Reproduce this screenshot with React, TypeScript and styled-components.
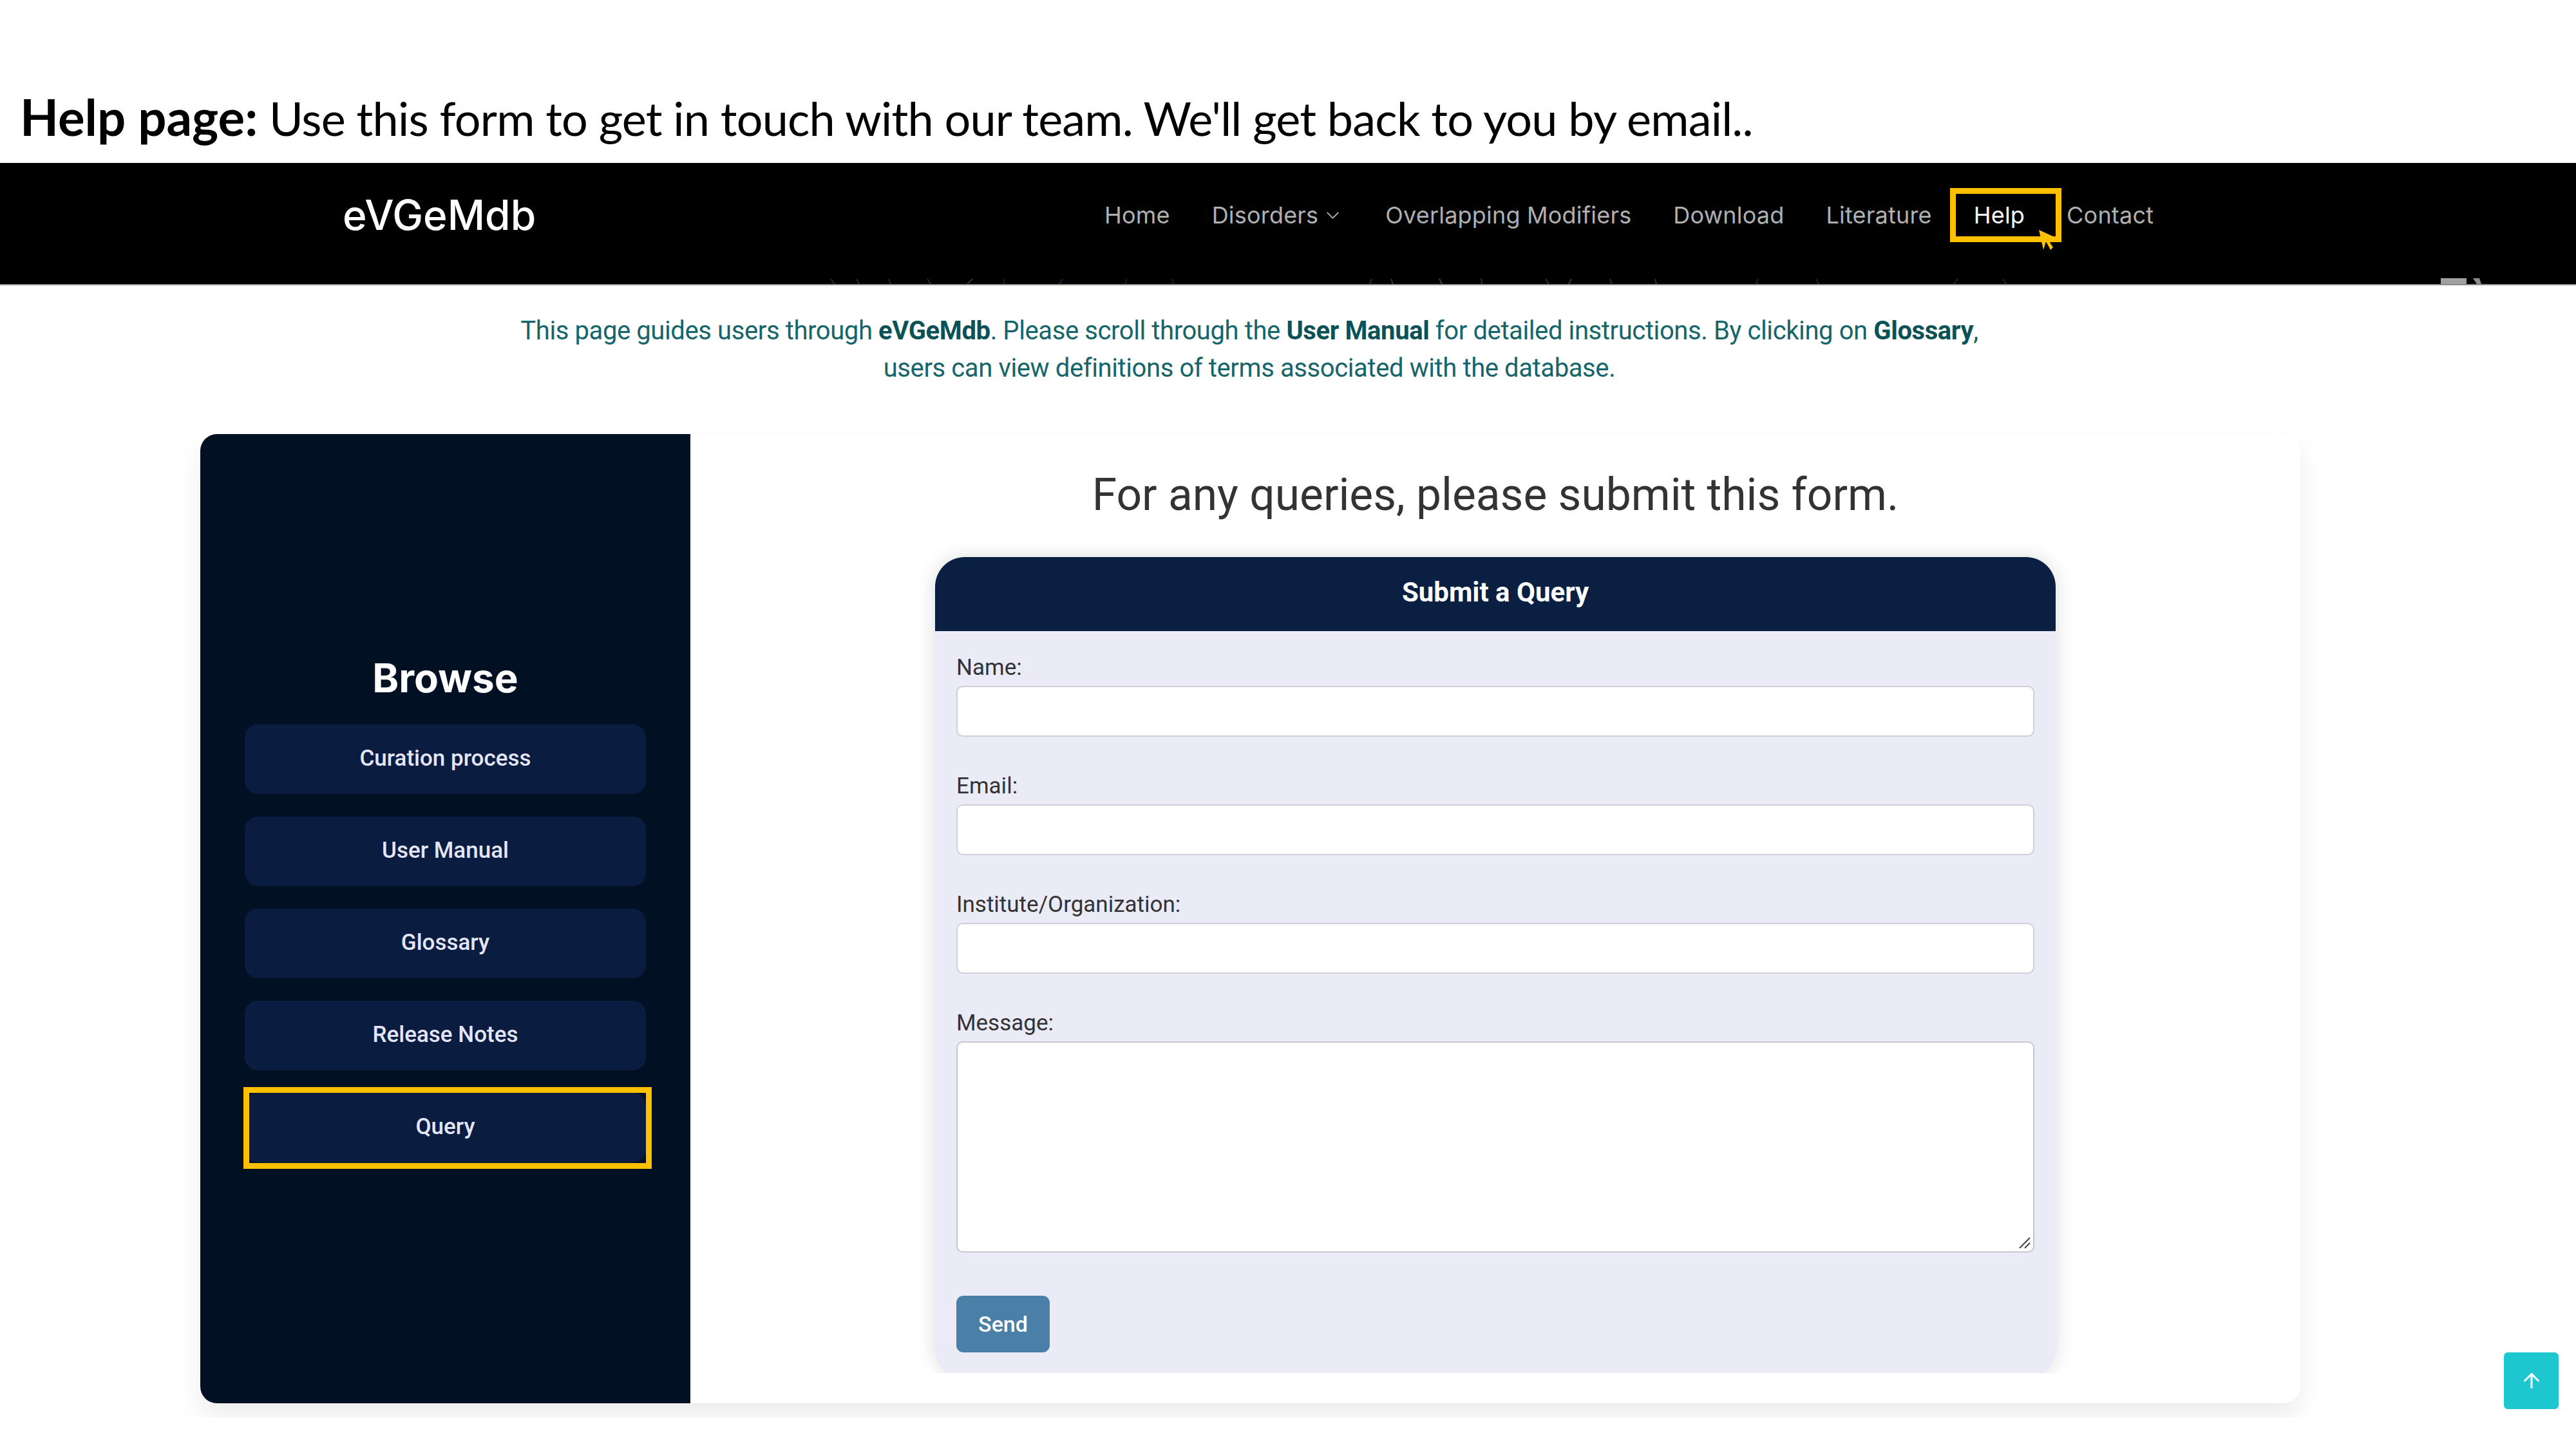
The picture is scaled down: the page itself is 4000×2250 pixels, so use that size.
import { createGlobalStyle, styled } from 'styled-components';
import { ArrowUp, ChevronDown } from 'lucide-react';

const GlobalStyle = createGlobalStyle`
  html, body {
    margin: 0;
    padding: 0;
    background: #fff;
  }
  * {
    box-sizing: border-box;
  }
`;

const Page = styled.div`
  position: relative;
  width: 4000px;
  height: 2250px;
  overflow: hidden;
  background: #fff;
  font-family: Roboto, sans-serif;
`;

const Caption = styled.h1`
  margin: 0;
  height: 253px;
  padding: 136px 0 0 31px;
  font-family: Lato, "Open Sans", sans-serif;
  font-size: 72px;
  font-weight: 400;
  letter-spacing: -0.8px;
  line-height: 90px;
  color: #000;
  white-space: nowrap;

  b {
    font-size: 78px;
    font-weight: 700;
    letter-spacing: 0;
  }
`;

const Navbar = styled.nav`
  position: relative;
  display: flex;
  align-items: flex-start;
  height: 190px;
  padding: 46px 0 0 532px;
  background: #000;
  border-bottom: 2px solid #8c8c8c;
`;

const Logo = styled.div`
  width: 1183px;
  font-family: Inter, sans-serif;
  font-size: 64px;
  font-weight: 500;
  line-height: 70px;
  color: #fff;
`;

const NavLinks = styled.div`
  display: flex;
  align-items: center;
  gap: 65px;
  height: 70px;
`;

const NavLink = styled.a<{ $active?: boolean }>`
  position: relative;
  display: flex;
  align-items: center;
  gap: 6px;
  font-family: Inter, sans-serif;
  font-size: 36px;
  font-weight: 400;
  letter-spacing: 0.2px;
  white-space: nowrap;
  color: ${p => (p.$active ? '#fff' : '#b0b0b0')};
`;

const HelpBox = styled.span`
  position: absolute;
  left: -37px;
  top: -20px;
  width: 173px;
  height: 84px;
  border: 9px solid #ffc000;
`;

const Pointer = styled.svg`
  position: absolute;
  left: 101px;
  top: 45px;
`;

const NavDebris = styled.svg`
  position: absolute;
  left: 0;
  bottom: 0;
`;

const Intro = styled.p`
  width: 2400px;
  margin: 0 0 0 740px;
  height: 231px;
  padding-top: 42px;
  font-size: 40px;
  letter-spacing: -0.4px;
  line-height: 58px;
  text-align: center;
  color: #15656a;

  b {
    font-weight: 700;
    color: #0b5257;
  }
`;

const CardArea = styled.div`
  height: 1527px;
  padding-left: 311px;
  clip-path: inset(-50px 0 0 0);
`;

const Card = styled.section`
  display: flex;
  width: 3261px;
  height: 1505px;
  border-radius: 26px;
  background: #fff;
  box-shadow: 0 20px 40px rgba(0, 0, 0, 0.08);
`;

const Sidebar = styled.aside`
  display: flex;
  flex-direction: column;
  flex: 0 0 761px;
  padding: 343px 69px 0;
  border-radius: 26px 0 0 26px;
  background: #021024;
`;

const SidebarTitle = styled.h2`
  margin: 0 0 36px;
  font-family: Inter, sans-serif;
  font-size: 62px;
  font-weight: 700;
  line-height: 72px;
  text-align: center;
  color: #fff;
`;

const SideList = styled.div`
  display: flex;
  flex-direction: column;
  gap: 35px;
`;

const SideButton = styled.a`
  position: relative;
  display: flex;
  align-items: center;
  justify-content: center;
  height: 108px;
  padding-bottom: 4px;
  border-radius: 20px;
  background: #0a1c3f;
  font-size: 35px;
  font-weight: 500;
  color: #e3e6fb;
`;

const QueryMark = styled.span`
  position: absolute;
  left: -2px;
  top: -9px;
  width: 634px;
  height: 127px;
  border: 9px solid #ffc000;
`;

const Main = styled.main`
  flex: 1;
  display: flex;
  flex-direction: column;
  align-items: center;
  padding: 0 380px;
  overflow: hidden;
  height: 1458px;
`;

const Heading = styled.h2`
  flex: none;
  margin: 0;
  height: 191px;
  padding-top: 52px;
  font-size: 69.5px;
  font-weight: 400;
  line-height: 86px;
  white-space: nowrap;
  color: #333;
`;

const FormCard = styled.form`
  flex: none;
  width: 1740px;
  height: 1275px;
  border-radius: 46px;
  overflow: hidden;
  background: #ebebf8;
  box-shadow: 0 0 30px rgba(0, 0, 0, 0.14);
`;

const FormHeader = styled.div`
  height: 115px;
  padding-top: 31px;
  background: #0b1f42;
  font-size: 42px;
  font-weight: 700;
  line-height: 48px;
  text-align: center;
  color: #fff;
`;

const FormBody = styled.div`
  display: flex;
  flex-direction: column;
  gap: 56px;
  padding: 36px 33px 0;
`;

const Field = styled.label`
  position: relative;
  display: flex;
  flex-direction: column;
  gap: 7px;
  font-size: 35px;
  line-height: 42px;
  color: #333;
`;

const TextInput = styled.input`
  width: 100%;
  height: 79px;
  border: 2px solid #cfcfd8;
  border-radius: 10px;
  background: #fff;
`;

const MessageInput = styled.textarea`
  width: 100%;
  height: 328px;
  border: 2px solid #c6c6d4;
  border-radius: 10px;
  background: #fff;
  resize: none;
  display: block;
`;

const Grip = styled.svg`
  position: absolute;
  right: 6px;
  bottom: 6px;
`;

const SendButton = styled.button`
  align-self: flex-start;
  width: 145px;
  height: 88px;
  margin-top: 11px;
  border: none;
  border-radius: 11px;
  background: #4a7fa7;
  font-family: Roboto, sans-serif;
  font-size: 34px;
  font-weight: 500;
  color: #fff;
`;

const ToTop = styled.a`
  position: absolute;
  left: 3888px;
  top: 2100px;
  display: flex;
  align-items: center;
  justify-content: center;
  width: 85px;
  height: 88px;
  border-radius: 6px;
  background: #1cc7d0;
  color: #fff;
`;

const sideItems = ['Curation process', 'User Manual', 'Glossary', 'Release Notes', 'Query'];

// what shows of the hero image under the navbar: [x, lean, colour]
const debris: [number, number, string][] = [
  [1290, 6, '#2a2a2a'], [1330, 4, '#2a2a2a'], [1380, 3, '#2a2a2a'], [1440, 5, '#2a2a2a'], [1510, -8, '#333'],
  [1560, -2, '#0d2230'], [1650, -5, '#0d2a3e'], [1750, -3, '#0d2230'], [1820, 2, '#0d2230'],
  [2130, -3, '#0f3a3a'], [2160, 3, '#4a3418'], [2235, 4, '#4a4418'], [2300, 1, '#0f3a3a'],
  [2400, 5, '#0f3a3a'], [2440, -4, '#3a3a20'], [2500, 3, '#0f3a3a'], [2570, 2, '#0f3a3a'],
  [2730, -3, '#0f2a3a'], [2820, 4, '#0f2a3a'], [3040, -6, '#0d2a3e'], [3110, 5, '#0d2a3e'],
];

export default function App() {
  return (
    <Page>
      <GlobalStyle />
      <Caption>
        <b>Help page:</b> Use this form to get in touch with our team. We'll get back to you by email..
      </Caption>
      <Navbar>
        <Logo>eVGeMdb</Logo>
        <NavLinks>
          <NavLink>Home</NavLink>
          <NavLink>
            Disorders
            <ChevronDown size={33} strokeWidth={1.4} />
          </NavLink>
          <NavLink>Overlapping Modifiers</NavLink>
          <NavLink>Download</NavLink>
          <NavLink>Literature</NavLink>
          <NavLink $active>
            Help
            <HelpBox />
            <Pointer width="24" height="33" viewBox="0 0 24 33">
              <polygon points="0,0 22,10 14,15 22,27 18,31 11,18 7,31" fill="#ffc000" />
            </Pointer>
          </NavLink>
          <NavLink>Contact</NavLink>
        </NavLinks>
        <NavDebris width="4000" height="9" viewBox="0 0 4000 9">
          {debris.map(([x, lean, colour]) => (
            <line key={x} x1={x} y1="1" x2={x + lean} y2="9" stroke={colour} strokeWidth="2" />
          ))}
          <rect x="3790" y="0" width="40" height="9" fill="#a0a0a0" />
          <polygon points="3840,0 3850,0 3853,9 3846,9" fill="#8c8c8c" />
        </NavDebris>
      </Navbar>
      <Intro>
        This page guides users through <b>eVGeMdb</b>. Please scroll through the <b>User Manual</b> for detailed
        instructions. By clicking on <b>Glossary</b>,<br />
        users can view definitions of terms associated with the database.
      </Intro>
      <CardArea>
        <Card>
          <Sidebar>
            <SidebarTitle>Browse</SidebarTitle>
            <SideList>
              {sideItems.map(item => (
                <SideButton key={item}>
                  {item}
                  {item === 'Query' && <QueryMark />}
                </SideButton>
              ))}
            </SideList>
          </Sidebar>
          <Main>
            <Heading>For any queries, please submit this form.</Heading>
            <FormCard>
              <FormHeader>Submit a Query</FormHeader>
              <FormBody>
                <Field>
                  Name:
                  <TextInput />
                </Field>
                <Field>
                  Email:
                  <TextInput />
                </Field>
                <Field>
                  Institute/Organization:
                  <TextInput />
                </Field>
                <Field>
                  Message:
                  <MessageInput />
                  <Grip width="20" height="20" viewBox="0 0 20 20">
                    <path d="M3 19 L19 3 M11 19 L19 11" stroke="#444" strokeWidth="2" />
                  </Grip>
                </Field>
                <SendButton type="button">Send</SendButton>
              </FormBody>
            </FormCard>
          </Main>
        </Card>
      </CardArea>
      <ToTop>
        <ArrowUp size={36} strokeWidth={2} />
      </ToTop>
    </Page>
  );
}
